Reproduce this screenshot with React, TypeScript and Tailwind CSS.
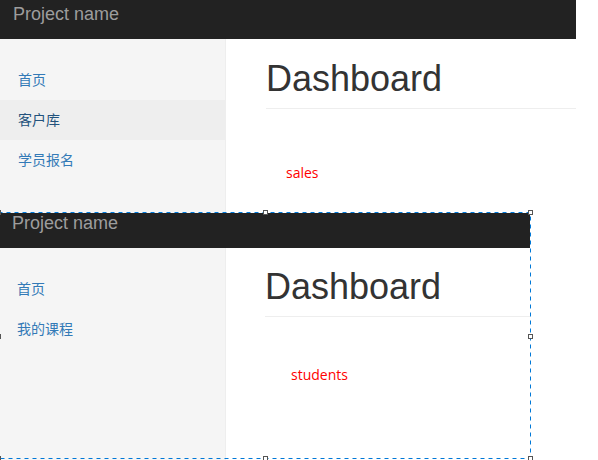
type ScreenProps = {
  width: number;
  navH: string;
  brandPad: string;
  itemPad: string;
  items: string[];
  activeIndex?: number;
  mainPad: string;
  note: string;
  notePad: string;
  height: string;
};

const Screen = ({ navH, brandPad, itemPad, items, activeIndex, mainPad, note, notePad, height, width }: ScreenProps) => {
  return (
    <div className={`flex flex-col bg-white ${height}`} style={{ width }}>
      <div className={`bg-[#222] shrink-0 ${navH}`}>
        <div className={`text-[18px] leading-[20px] text-[#9d9d9d] font-['Liberation_Sans',Arial,sans-serif] ${brandPad}`}>
          Project name
        </div>
      </div>
      <div className="flex flex-1 min-h-0">
        <div className="w-[226px] shrink-0 bg-[#f5f5f5] border-r border-[#eee] pt-[21px]">
          {items.map((item, i) => (
            <div
              key={item}
              className={`h-[40px] flex items-center pb-[2px] text-[14px] leading-[20px] font-['Noto_Sans_CJK_SC',sans-serif] ${itemPad} ${
                i === activeIndex ? 'bg-[#eee] text-[#23527c]' : 'text-[#337ab7]'
              }`}
            >
              {item}
            </div>
          ))}
        </div>
        <div className={`flex-1 min-w-0 ${mainPad}`}>
          <div className="border-b border-[#eee] pb-[9px]">
            <h1 className="text-[36px] leading-[40px] text-[#333] font-['Liberation_Sans',Arial,sans-serif]">
              Dashboard
            </h1>
          </div>
          <div className={`text-[14px] leading-[20px] text-[#f00] font-['Open_Sans',sans-serif] ${notePad}`}>
            {note}
          </div>
        </div>
      </div>
    </div>
  );
};

const handles = [
  [-3.5, 210.5],
  [263.5, 210.5],
  [528.5, 210.5],
  [-3.5, 334.5],
  [528.5, 334.5],
  [-3.5, 456.5],
  [263.5, 456.5],
  [528.5, 456.5],
];

export default function App() {
  return (
    <div className="relative w-[598px] h-[460px] overflow-hidden bg-white">
      <Screen
        width={576}
        height="h-[460px]"
        navH="h-[39px]"
        brandPad="pl-[13px] pt-[4px]"
        itemPad="pl-[18px]"
        items={['首页', '客户库', '学员报名']}
        activeIndex={1}
        mainPad="pl-[40px] pt-[20px]"
        note="sales"
        notePad="mt-[54px] pl-[20px]"
      />

      <div className="absolute left-0 top-[213px]">
        <Screen
          width={530}
          height="h-[245px]"
          navH="h-[35px]"
          brandPad="pl-[12px] pt-0"
          itemPad="pl-[17px]"
          items={['首页', '我的课程']}
          mainPad="pl-[39px] pt-[19px]"
          note="students"
          notePad="mt-[48px] pl-[26px]"
        />
      </div>

      <svg className="absolute left-0 top-0 pointer-events-none" width="598" height="460">
        <rect
          x="-1.5"
          y="212.5"
          width="532"
          height="246"
          fill="none"
          stroke="#0078d7"
          strokeWidth="1"
          strokeDasharray="4 4"
        />
        {handles.map(([x, y]) => (
          <rect key={`${x}-${y}`} x={x} y={y} width="4" height="4" fill="#fff" stroke="#555" strokeWidth="1" />
        ))}
      </svg>
    </div>
  );
}
